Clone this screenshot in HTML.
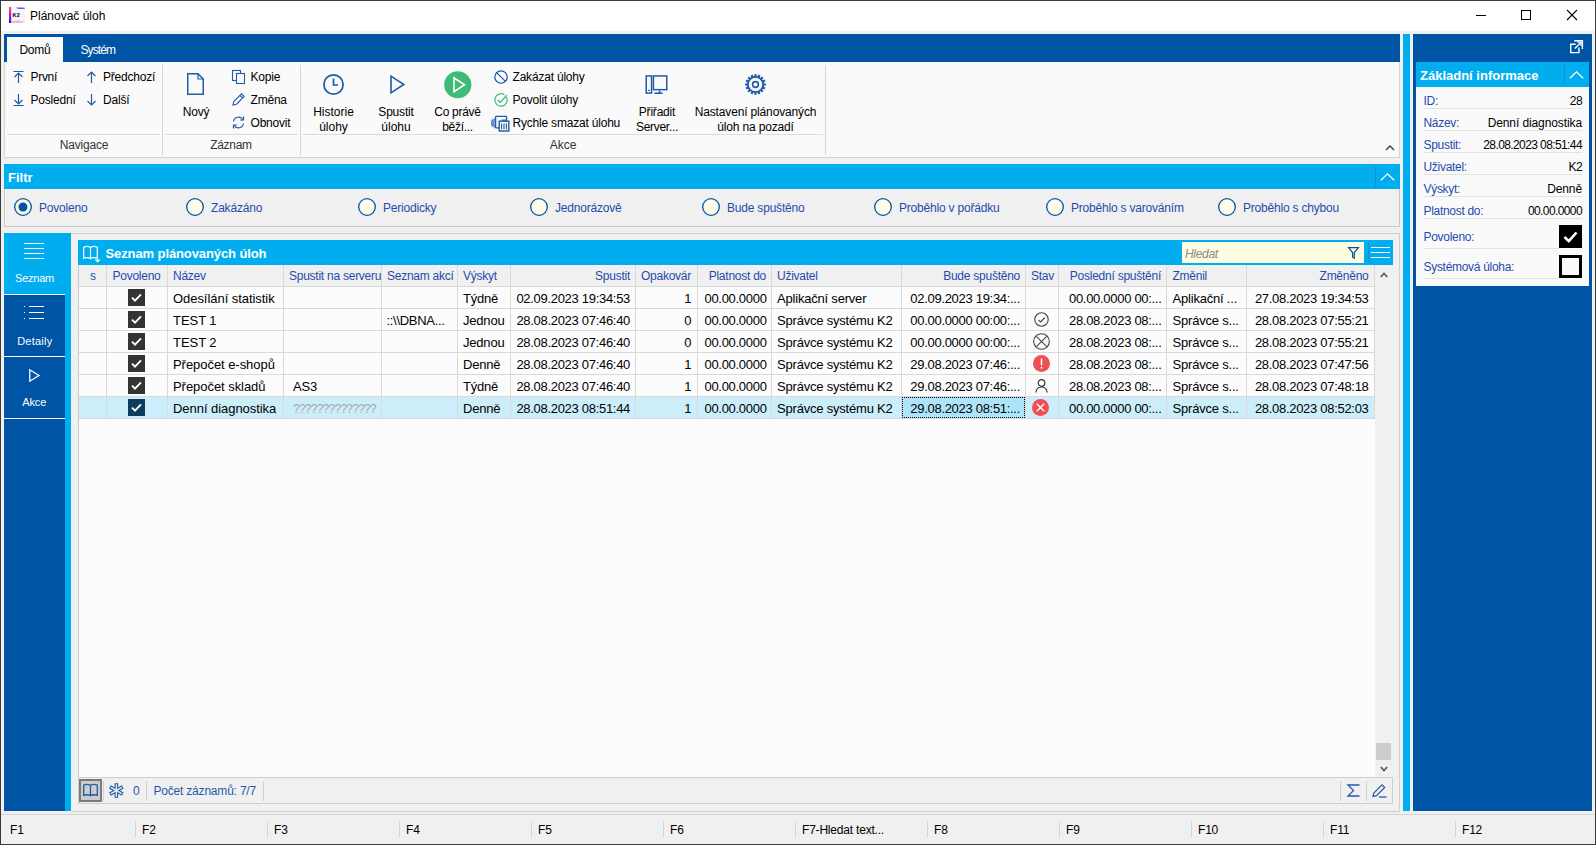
<!DOCTYPE html><html><head><meta charset="utf-8"><style>
html,body{margin:0;padding:0;}
body{width:1596px;height:845px;overflow:hidden;position:relative;background:#f0f0f0;font-family:"Liberation Sans",sans-serif;}
.a{position:absolute;}
.t{position:absolute;white-space:nowrap;line-height:16px;}
svg{overflow:visible}
</style></head><body>
<div class="a" style="left:0px;top:0px;width:1596px;height:845px;background:#f0f0f0;"></div>
<div class="a" style="left:0px;top:0px;width:1596px;height:31px;background:#ffffff;"></div>
<div class="a" style="left:0px;top:0px;width:1596px;height:1px;background:#3a3a3a;"></div>
<div class="a" style="left:0px;top:0px;width:1px;height:845px;background:#3a3a3a;"></div>
<div class="a" style="left:1595px;top:0px;width:1px;height:845px;background:#3a3a3a;"></div>
<div class="a" style="left:0px;top:844px;width:1596px;height:1px;background:#3a3a3a;"></div>
<svg class="a" style="left:9px;top:7px;" width="16" height="16" viewBox="0 0 16 16"><defs><linearGradient id="k2g" x1="0" y1="0" x2="0" y2="1"><stop offset="0" stop-color="#ff5060"/><stop offset="0.5" stop-color="#d010d8"/><stop offset="1" stop-color="#2a10f0"/></linearGradient><linearGradient id="k2b" x1="0" y1="0" x2="1" y2="0"><stop offset="0" stop-color="#ff9060"/><stop offset="0.5" stop-color="#f070a0"/><stop offset="1" stop-color="#d090f0" stop-opacity="0.5"/></linearGradient></defs><rect x="0" y="0" width="16" height="16" fill="#f7f6fb"/><rect x="0" y="0" width="2.2" height="16" fill="url(#k2g)"/><path d="M7.5 0.6C10 0.3 13 0.5 15.8 0.8V1.8C13 2.3 10 2.2 7.5 1.2Z" fill="#7050f0"/><text x="3.6" y="10" font-size="5.6" font-weight="bold" font-family="Liberation Sans" fill="#000">K2</text><path d="M2.2 16V14.3C6 13.5 10 12.7 15.8 14.5V16Z" fill="url(#k2b)" opacity="0.55"/></svg>
<div class="t" style="top:8px;font-size:12px;color:#000;left:30px;">Plánovač úloh</div>
<div class="a" style="left:1476px;top:15px;width:10px;height:1px;background:#000;"></div>
<div class="a" style="left:1521px;top:10px;width:8px;height:8px;border:1px solid #000"></div>
<svg class="a" style="left:1567px;top:10px;" width="10" height="10" viewBox="0 0 10 10"><path d="M0 0L10 10M10 0L0 10" stroke="#000" stroke-width="1.1"/></svg>
<div class="a" style="left:4px;top:34px;width:1396px;height:28px;background:#0054a6;"></div>
<div class="a" style="left:7px;top:37px;width:56px;height:25px;background:#fafafa;"></div>
<div class="t" style="top:42px;font-size:12px;color:#000;left:19.5px;letter-spacing:-0.3px">Domů</div>
<div class="t" style="top:42px;font-size:12px;color:#fff;left:80.5px;letter-spacing:-0.9px">Systém</div>
<div class="a" style="left:4px;top:62px;width:1394px;height:95px;background:#fafafa;border:1px solid #d5d5d5;border-top:none"></div>
<div class="a" style="left:162px;top:65px;width:1px;height:90px;background:#d5d5d5;"></div>
<div class="a" style="left:300px;top:65px;width:1px;height:90px;background:#d5d5d5;"></div>
<div class="a" style="left:825px;top:65px;width:1px;height:90px;background:#d5d5d5;"></div>
<div class="a" style="left:7px;top:134px;width:153px;height:1px;background:#dcdcdc;"></div>
<div class="a" style="left:165px;top:134px;width:133px;height:1px;background:#dcdcdc;"></div>
<div class="a" style="left:303px;top:134px;width:520px;height:1px;background:#dcdcdc;"></div>
<div class="t" style="top:137px;font-size:12px;color:#333;left:-116px;width:400px;text-align:center;letter-spacing:-0.2px">Navigace</div>
<div class="t" style="top:137px;font-size:12px;color:#333;left:31px;width:400px;text-align:center;letter-spacing:-0.3px">Záznam</div>
<div class="t" style="top:137px;font-size:12px;color:#333;left:363px;width:400px;text-align:center;">Akce</div>
<svg class="a" style="left:1385px;top:145px;" width="10" height="6" viewBox="0 0 10 6"><path d="M1 5L5 1L9 5" stroke="#444" stroke-width="1.5" fill="none"/></svg>
<svg class="a" style="left:13px;top:70.5px;" width="11" height="12" viewBox="0 0 11 12"><path d="M0.5 0.5H10.5M5.5 2V12M1.5 6L5.5 2L9.5 6" stroke="#1f5ba6" stroke-width="1.2" fill="none"/></svg>
<div class="t" style="top:69px;font-size:12px;color:#000;left:30.5px;letter-spacing:-0.3px">První</div>
<svg class="a" style="left:13px;top:93.5px;" width="11" height="12" viewBox="0 0 11 12"><path d="M0.5 11.5H10.5M5.5 0V10M1.5 6L5.5 10L9.5 6" stroke="#1f5ba6" stroke-width="1.2" fill="none"/></svg>
<div class="t" style="top:92px;font-size:12px;color:#000;left:30.5px;letter-spacing:-0.2px">Poslední</div>
<svg class="a" style="left:86px;top:70.5px;" width="11" height="12" viewBox="0 0 11 12"><path d="M5.5 1V12M1.5 5L5.5 1L9.5 5" stroke="#1f5ba6" stroke-width="1.2" fill="none"/></svg>
<div class="t" style="top:69px;font-size:12px;color:#000;left:103px;letter-spacing:-0.2px">Předchozí</div>
<svg class="a" style="left:86px;top:93.5px;" width="11" height="12" viewBox="0 0 11 12"><path d="M5.5 0V11M1.5 7L5.5 11L9.5 7" stroke="#1f5ba6" stroke-width="1.2" fill="none"/></svg>
<div class="t" style="top:92px;font-size:12px;color:#000;left:103px;letter-spacing:-0.2px">Další</div>
<svg class="a" style="left:187px;top:73px;" width="17" height="22" viewBox="0 0 17 22"><path d="M0.75 0.75H11L16.25 6V21.25H0.75Z" stroke="#1f5ba6" stroke-width="1.5" fill="none"/><path d="M11 0.75V6H16.25" stroke="#1f5ba6" stroke-width="1.2" fill="none"/></svg>
<div class="t" style="top:104px;font-size:12px;color:#000;left:-4px;width:400px;text-align:center;letter-spacing:-0.2px">Nový</div>
<svg class="a" style="left:232px;top:70px;" width="13" height="14" viewBox="0 0 13 14"><rect x="0.5" y="0.5" width="8" height="10" stroke="#1f5ba6" stroke-width="1.1" fill="#fafafa"/><rect x="4.5" y="3.5" width="8" height="10" stroke="#1f5ba6" stroke-width="1.1" fill="#fafafa"/></svg>
<div class="t" style="top:69px;font-size:12px;color:#000;left:250.5px;letter-spacing:-0.2px">Kopie</div>
<svg class="a" style="left:232px;top:93px;" width="13" height="13" viewBox="0 0 13 13"><path d="M1 12L1.8 8.5L9.5 0.8L12.2 3.5L4.5 11.2Z M8 2.3L10.7 5" stroke="#1f5ba6" stroke-width="1.1" fill="none"/></svg>
<div class="t" style="top:92px;font-size:12px;color:#000;left:250.5px;letter-spacing:-0.2px">Změna</div>
<svg class="a" style="left:232px;top:116px;" width="13" height="13" viewBox="0 0 13 13"><path d="M1.5 5.5A5.2 5.2 0 0 1 11 3.5M11.5 7.5A5.2 5.2 0 0 1 2 9.5" stroke="#1f5ba6" stroke-width="1.2" fill="none"/><path d="M11.5 0.5V4H8M1.5 12.5V9H5" stroke="#1f5ba6" stroke-width="1.2" fill="none"/></svg>
<div class="t" style="top:115px;font-size:12px;color:#000;left:250.5px;letter-spacing:-0.2px">Obnovit</div>
<svg class="a" style="left:323px;top:74px;" width="21" height="21" viewBox="0 0 21 21"><circle cx="10.5" cy="10.5" r="9.6" stroke="#1f5ba6" stroke-width="1.7" fill="none"/><path d="M10.5 4.5V11H15" stroke="#1f5ba6" stroke-width="1.7" fill="none"/></svg>
<div class="t" style="top:104px;font-size:12px;color:#000;left:133.5px;width:400px;text-align:center;">Historie</div>
<div class="t" style="top:119px;font-size:12px;color:#000;left:133.5px;width:400px;text-align:center;">úlohy</div>
<svg class="a" style="left:390px;top:75px;" width="15" height="19" viewBox="0 0 15 19"><path d="M1 1.2V17.8L13.8 9.5Z" stroke="#1f5ba6" stroke-width="1.6" fill="none" stroke-linejoin="miter"/></svg>
<div class="t" style="top:104px;font-size:12px;color:#000;left:196px;width:400px;text-align:center;letter-spacing:-0.2px">Spustit</div>
<div class="t" style="top:119px;font-size:12px;color:#000;left:196px;width:400px;text-align:center;">úlohu</div>
<svg class="a" style="left:444px;top:71px;" width="28" height="28" viewBox="0 0 28 28"><circle cx="13.75" cy="13.75" r="13.6" fill="#3dbd74"/><path d="M10 6.8V20.7L20.5 13.75Z" stroke="#fff" stroke-width="1.6" fill="none"/></svg>
<div class="t" style="top:104px;font-size:12px;color:#000;left:257.5px;width:400px;text-align:center;letter-spacing:-0.3px">Co právě</div>
<div class="t" style="top:119px;font-size:12px;color:#000;left:257.5px;width:400px;text-align:center;letter-spacing:-0.3px">běží...</div>
<svg class="a" style="left:494px;top:70px;" width="14" height="14" viewBox="0 0 14 14"><circle cx="7" cy="7" r="6.2" stroke="#1f5ba6" stroke-width="1.3" fill="none"/><path d="M2.6 2.6L11.4 11.4" stroke="#1f5ba6" stroke-width="1.3"/></svg>
<div class="t" style="top:69px;font-size:12px;color:#000;left:512.5px;letter-spacing:-0.2px">Zakázat úlohy</div>
<svg class="a" style="left:494px;top:93px;" width="14" height="14" viewBox="0 0 14 14"><path d="M12.6 4.2A6.2 6.2 0 1 1 10.5 1.8" stroke="#3dbd74" stroke-width="1.2" fill="none"/><path d="M3.8 7L6.2 9.4L12.8 2.2" stroke="#3dbd74" stroke-width="1.3" fill="none"/></svg>
<div class="t" style="top:92px;font-size:12px;color:#000;left:512.5px;letter-spacing:-0.2px">Povolit úlohy</div>
<svg class="a" style="left:491px;top:115px;" width="19" height="17" viewBox="0 0 19 17"><path d="M1.3 4.5C0.8 6.5 0.8 9.5 1.3 11.5M3.2 3.5C2.7 6 2.7 10 3.2 12.5" stroke="#1f5ba6" stroke-width="1.2" fill="none"/><rect x="4.6" y="1.4" width="11" height="11.5" rx="0.5" stroke="#1f5ba6" stroke-width="1.3" fill="#fafafa"/><rect x="8.2" y="6.2" width="9.6" height="9.8" stroke="#1f5ba6" stroke-width="1.4" fill="#fafafa"/><path d="M10.6 8.5V14.2M13 8.5V14.2M15.4 8.5V14.2" stroke="#1f5ba6" stroke-width="1.1"/><path d="M10.5 5.2H15.5" stroke="#1f5ba6" stroke-width="1.2"/></svg>
<div class="t" style="top:115px;font-size:12px;color:#000;left:512.5px;letter-spacing:-0.2px">Rychle smazat úlohu</div>
<svg class="a" style="left:645px;top:74px;" width="23" height="21" viewBox="0 0 23 21"><rect x="1.25" y="1.95" width="5.3" height="17.1" stroke="#1f5ba6" stroke-width="1.5" fill="none"/><rect x="8.45" y="1.95" width="13.3" height="13.7" stroke="#1f5ba6" stroke-width="1.5" fill="none"/><path d="M14.6 16.4V19M9.5 19.2H17.6" stroke="#1f5ba6" stroke-width="1.6"/><path d="M3 16.3H5" stroke="#1f5ba6" stroke-width="1"/></svg>
<div class="t" style="top:104px;font-size:12px;color:#000;left:457px;width:400px;text-align:center;letter-spacing:-0.2px">Přiřadit</div>
<div class="t" style="top:119px;font-size:12px;color:#000;left:457px;width:400px;text-align:center;letter-spacing:-0.3px">Server...</div>
<svg class="a" style="left:745px;top:74px;" width="21" height="21" viewBox="0 0 21 21"><g transform="translate(10.5 10.5)"><rect x="-1.1" y="-10.3" width="2.2" height="3" fill="#1f5ba6" transform="rotate(0.0)"/><rect x="-1.1" y="-10.3" width="2.2" height="3" fill="#1f5ba6" transform="rotate(22.5)"/><rect x="-1.1" y="-10.3" width="2.2" height="3" fill="#1f5ba6" transform="rotate(45.0)"/><rect x="-1.1" y="-10.3" width="2.2" height="3" fill="#1f5ba6" transform="rotate(67.5)"/><rect x="-1.1" y="-10.3" width="2.2" height="3" fill="#1f5ba6" transform="rotate(90.0)"/><rect x="-1.1" y="-10.3" width="2.2" height="3" fill="#1f5ba6" transform="rotate(112.5)"/><rect x="-1.1" y="-10.3" width="2.2" height="3" fill="#1f5ba6" transform="rotate(135.0)"/><rect x="-1.1" y="-10.3" width="2.2" height="3" fill="#1f5ba6" transform="rotate(157.5)"/><rect x="-1.1" y="-10.3" width="2.2" height="3" fill="#1f5ba6" transform="rotate(180.0)"/><rect x="-1.1" y="-10.3" width="2.2" height="3" fill="#1f5ba6" transform="rotate(202.5)"/><rect x="-1.1" y="-10.3" width="2.2" height="3" fill="#1f5ba6" transform="rotate(225.0)"/><rect x="-1.1" y="-10.3" width="2.2" height="3" fill="#1f5ba6" transform="rotate(247.5)"/><rect x="-1.1" y="-10.3" width="2.2" height="3" fill="#1f5ba6" transform="rotate(270.0)"/><rect x="-1.1" y="-10.3" width="2.2" height="3" fill="#1f5ba6" transform="rotate(292.5)"/><rect x="-1.1" y="-10.3" width="2.2" height="3" fill="#1f5ba6" transform="rotate(315.0)"/><rect x="-1.1" y="-10.3" width="2.2" height="3" fill="#1f5ba6" transform="rotate(337.5)"/><circle r="7.6" stroke="#1f5ba6" stroke-width="1.8" fill="none"/><circle r="2.9" stroke="#1f5ba6" stroke-width="1.6" fill="none"/></g></svg>
<div class="t" style="top:104px;font-size:12px;color:#000;left:555.5px;width:400px;text-align:center;letter-spacing:-0.15px">Nastavení plánovaných</div>
<div class="t" style="top:119px;font-size:12px;color:#000;left:555.5px;width:400px;text-align:center;letter-spacing:-0.15px">úloh na pozadí</div>
<div class="a" style="left:4px;top:164px;width:1396px;height:25px;background:#00aeef;"></div>
<div class="t" style="top:169.5px;font-size:13px;color:#fff;font-weight:bold;left:8px;">Filtr</div>
<div class="a" style="left:1375px;top:166px;width:1px;height:21px;background:#1591c9;"></div>
<svg class="a" style="left:1380px;top:173px;" width="15" height="8" viewBox="0 0 15 8"><path d="M0.8 7.2L7.5 0.8L14.2 7.2" stroke="#fff" stroke-width="1.3" fill="none"/></svg>
<div class="a" style="left:4px;top:189px;width:1394px;height:37px;background:#f0f0f0;border:1px solid #c9c9c9;border-top:none"></div>
<svg class="a" style="left:14px;top:198px;" width="18" height="18" viewBox="0 0 18 18"><circle cx="9" cy="9" r="8.3" fill="#fffde8" stroke="#0054a6" stroke-width="1.3"/><circle cx="9" cy="9" r="4.5" fill="#0054a6"/></svg>
<div class="t" style="top:200px;font-size:12px;color:#1f4cac;left:39px;letter-spacing:-0.2px">Povoleno</div>
<svg class="a" style="left:186px;top:198px;" width="18" height="18" viewBox="0 0 18 18"><circle cx="9" cy="9" r="8.3" fill="#fffde8" stroke="#0054a6" stroke-width="1.3"/></svg>
<div class="t" style="top:200px;font-size:12px;color:#1f4cac;left:211px;letter-spacing:-0.2px">Zakázáno</div>
<svg class="a" style="left:358px;top:198px;" width="18" height="18" viewBox="0 0 18 18"><circle cx="9" cy="9" r="8.3" fill="#fffde8" stroke="#0054a6" stroke-width="1.3"/></svg>
<div class="t" style="top:200px;font-size:12px;color:#1f4cac;left:383px;letter-spacing:-0.2px">Periodicky</div>
<svg class="a" style="left:530px;top:198px;" width="18" height="18" viewBox="0 0 18 18"><circle cx="9" cy="9" r="8.3" fill="#fffde8" stroke="#0054a6" stroke-width="1.3"/></svg>
<div class="t" style="top:200px;font-size:12px;color:#1f4cac;left:555px;letter-spacing:-0.2px">Jednorázově</div>
<svg class="a" style="left:702px;top:198px;" width="18" height="18" viewBox="0 0 18 18"><circle cx="9" cy="9" r="8.3" fill="#fffde8" stroke="#0054a6" stroke-width="1.3"/></svg>
<div class="t" style="top:200px;font-size:12px;color:#1f4cac;left:727px;letter-spacing:-0.2px">Bude spuštěno</div>
<svg class="a" style="left:874px;top:198px;" width="18" height="18" viewBox="0 0 18 18"><circle cx="9" cy="9" r="8.3" fill="#fffde8" stroke="#0054a6" stroke-width="1.3"/></svg>
<div class="t" style="top:200px;font-size:12px;color:#1f4cac;left:899px;letter-spacing:-0.2px">Proběhlo v pořádku</div>
<svg class="a" style="left:1046px;top:198px;" width="18" height="18" viewBox="0 0 18 18"><circle cx="9" cy="9" r="8.3" fill="#fffde8" stroke="#0054a6" stroke-width="1.3"/></svg>
<div class="t" style="top:200px;font-size:12px;color:#1f4cac;left:1071px;letter-spacing:-0.2px">Proběhlo s varováním</div>
<svg class="a" style="left:1218px;top:198px;" width="18" height="18" viewBox="0 0 18 18"><circle cx="9" cy="9" r="8.3" fill="#fffde8" stroke="#0054a6" stroke-width="1.3"/></svg>
<div class="t" style="top:200px;font-size:12px;color:#1f4cac;left:1243px;letter-spacing:-0.2px">Proběhlo s chybou</div>
<div class="a" style="left:4px;top:233px;width:67px;height:578px;background:#00aeef;"></div>
<div class="a" style="left:4px;top:295px;width:61px;height:516px;background:#0054a6;"></div>
<div class="a" style="left:4px;top:294px;width:61px;height:1px;background:#ffffff;"></div>
<div class="a" style="left:4px;top:356px;width:61px;height:1px;background:#ffffff;"></div>
<div class="a" style="left:4px;top:418px;width:61px;height:1px;background:#ffffff;"></div>
<div class="a" style="left:24px;top:243px;width:20px;height:1px;background:#ffffff;"></div>
<div class="a" style="left:24px;top:248px;width:20px;height:1px;background:#ffffff;"></div>
<div class="a" style="left:24px;top:253px;width:20px;height:1px;background:#ffffff;"></div>
<div class="a" style="left:24px;top:258px;width:20px;height:1px;background:#ffffff;"></div>
<div class="t" style="top:269.5px;font-size:11px;color:#fff;left:-165.5px;width:400px;text-align:center;letter-spacing:-0.25px">Seznam</div>
<div class="a" style="left:24px;top:306px;width:1px;height:1px;background:#ffffff;"></div>
<div class="a" style="left:29px;top:306px;width:15px;height:1px;background:#ffffff;"></div>
<div class="a" style="left:24px;top:312px;width:1px;height:1px;background:#ffffff;"></div>
<div class="a" style="left:29px;top:312px;width:15px;height:1px;background:#ffffff;"></div>
<div class="a" style="left:24px;top:318px;width:1px;height:1px;background:#ffffff;"></div>
<div class="a" style="left:29px;top:318px;width:15px;height:1px;background:#ffffff;"></div>
<div class="t" style="top:332.5px;font-size:11px;color:#fff;left:-165.2px;width:400px;text-align:center;letter-spacing:0.25px">Detaily</div>
<svg class="a" style="left:29px;top:369px;" width="11" height="13" viewBox="0 0 11 13"><path d="M0.8 0.8V12.2L10 6.5Z" stroke="#fff" stroke-width="1.3" fill="none"/></svg>
<div class="t" style="top:393.5px;font-size:11px;color:#fff;left:-165.8px;width:400px;text-align:center;letter-spacing:-0.1px">Akce</div>
<div class="a" style="left:71px;top:233px;width:1328px;height:577px;background:#f0f0f0;border:1px solid #cfcfcf;border-left:none"></div>
<div class="a" style="left:78px;top:240px;width:1315px;height:25px;background:#00aeef;"></div>
<svg class="a" style="left:83px;top:246px;" width="16" height="15" viewBox="0 0 16 15"><path d="M0.7 1.2C3 0.2 5.5 0.2 7.5 1.5C9.5 0.2 12 0.2 14.3 1.2V12.3C12 11.4 9.5 11.4 7.5 12.8C5.5 11.4 3 11.4 0.7 12.3Z M7.5 1.5V12.8" stroke="#fff" stroke-width="1.2" fill="none"/><path d="M11.6 13.6H17.6L14.6 16.6Z" fill="#fff"/></svg>
<div class="t" style="top:246.0px;font-size:13px;color:#fff;font-weight:bold;left:105.5px;letter-spacing:-0.1px">Seznam plánovaných úloh</div>
<div class="a" style="left:1182px;top:242px;width:182px;height:21px;background:#fefde2;"></div>
<div class="t" style="top:246px;font-size:12px;color:#8a8a8a;font-style:italic;left:1185px;letter-spacing:-0.3px">Hledat</div>
<svg class="a" style="left:1348px;top:247px;" width="11" height="12" viewBox="0 0 11 12"><path d="M0.6 0.6H10.4L6.3 5.5V11.2L4.6 10.2V5.5Z" stroke="#0054a6" stroke-width="1.2" fill="none"/></svg>
<div class="a" style="left:1368px;top:243px;width:1px;height:19px;background:#1591c9;"></div>
<div class="a" style="left:1371px;top:247px;width:19px;height:1px;background:#ffffff;"></div>
<div class="a" style="left:1371px;top:252px;width:19px;height:1px;background:#ffffff;"></div>
<div class="a" style="left:1371px;top:257px;width:19px;height:1px;background:#ffffff;"></div>
<div class="a" style="left:78px;top:265px;width:1297px;height:21px;background:#f0f0f0;"></div>
<div class="a" style="left:78px;top:286px;width:1297px;height:491px;background:#fcfcfc;"></div>
<div class="a" style="left:1375px;top:265px;width:17px;height:512px;background:#f0f0f0;"></div>
<svg class="a" style="left:1380px;top:272px;" width="8" height="6" viewBox="0 0 8 6"><path d="M0.8 5L4 1.5L7.2 5" stroke="#555" stroke-width="1.6" fill="none"/></svg>
<div class="a" style="left:1376px;top:743px;width:15px;height:17px;background:#cdcdcd;"></div>
<svg class="a" style="left:1380px;top:766px;" width="8" height="6" viewBox="0 0 8 6"><path d="M0.8 1L4 4.5L7.2 1" stroke="#555" stroke-width="1.6" fill="none"/></svg>
<div class="a" style="left:78px;top:265px;width:1px;height:512px;background:#c9c9c9;"></div>
<div class="a" style="left:79px;top:286px;width:1296px;height:1px;background:#d9d9d9;"></div>
<div class="a" style="left:106px;top:265px;width:1px;height:153px;background:#d9d9d9;"></div>
<div class="a" style="left:167px;top:265px;width:1px;height:153px;background:#d9d9d9;"></div>
<div class="a" style="left:283px;top:265px;width:1px;height:153px;background:#d9d9d9;"></div>
<div class="a" style="left:381px;top:265px;width:1px;height:153px;background:#d9d9d9;"></div>
<div class="a" style="left:457px;top:265px;width:1px;height:153px;background:#d9d9d9;"></div>
<div class="a" style="left:510px;top:265px;width:1px;height:153px;background:#d9d9d9;"></div>
<div class="a" style="left:635px;top:265px;width:1px;height:153px;background:#d9d9d9;"></div>
<div class="a" style="left:697px;top:265px;width:1px;height:153px;background:#d9d9d9;"></div>
<div class="a" style="left:771px;top:265px;width:1px;height:153px;background:#d9d9d9;"></div>
<div class="a" style="left:901px;top:265px;width:1px;height:153px;background:#d9d9d9;"></div>
<div class="a" style="left:1025px;top:265px;width:1px;height:153px;background:#d9d9d9;"></div>
<div class="a" style="left:1058px;top:265px;width:1px;height:153px;background:#d9d9d9;"></div>
<div class="a" style="left:1166px;top:265px;width:1px;height:153px;background:#d9d9d9;"></div>
<div class="a" style="left:1246px;top:265px;width:1px;height:153px;background:#d9d9d9;"></div>
<div class="a" style="left:1374px;top:265px;width:1px;height:153px;background:#d9d9d9;"></div>
<div class="t" style="top:267.5px;font-size:12px;color:#1f4cac;left:90px;letter-spacing:-0.25px">s</div>
<div class="t" style="top:267.5px;font-size:12px;color:#1f4cac;left:112.5px;letter-spacing:-0.25px">Povoleno</div>
<div class="t" style="top:267.5px;font-size:12px;color:#1f4cac;left:173px;letter-spacing:-0.25px">Název</div>
<div class="t" style="top:267.5px;font-size:12px;color:#1f4cac;left:289px;letter-spacing:-0.25px">Spustit na serveru</div>
<div class="t" style="top:267.5px;font-size:12px;color:#1f4cac;left:387px;letter-spacing:-0.25px">Seznam akcí</div>
<div class="t" style="top:267.5px;font-size:12px;color:#1f4cac;left:463px;letter-spacing:-0.25px">Výskyt</div>
<div class="t" style="top:267.5px;font-size:12px;color:#1f4cac;right:966px;letter-spacing:-0.25px">Spustit</div>
<div class="t" style="top:267.5px;font-size:12px;color:#1f4cac;left:641px;letter-spacing:-0.25px">Opakovár</div>
<div class="t" style="top:267.5px;font-size:12px;color:#1f4cac;right:830px;letter-spacing:-0.25px">Platnost do</div>
<div class="t" style="top:267.5px;font-size:12px;color:#1f4cac;left:777px;letter-spacing:-0.25px">Uživatel</div>
<div class="t" style="top:267.5px;font-size:12px;color:#1f4cac;right:576px;letter-spacing:-0.25px">Bude spuštěno</div>
<div class="t" style="top:267.5px;font-size:12px;color:#1f4cac;left:1031px;letter-spacing:-0.25px">Stav</div>
<div class="t" style="top:267.5px;font-size:12px;color:#1f4cac;right:435px;letter-spacing:-0.25px">Poslední spuštění</div>
<div class="t" style="top:267.5px;font-size:12px;color:#1f4cac;left:1172.5px;letter-spacing:-0.25px">Změnil</div>
<div class="t" style="top:267.5px;font-size:12px;color:#1f4cac;right:227.5px;letter-spacing:-0.25px">Změněno</div>
<div class="a" style="left:79px;top:308px;width:1296px;height:1px;background:#d9d9d9;"></div>
<svg class="a" style="left:128px;top:289px;" width="17" height="17" viewBox="0 0 17 17"><rect width="17" height="17" fill="#333333"/><path d="M4 8.6L7 11.6L13 5.4" stroke="#fff" stroke-width="1.9" fill="none"/></svg>
<div class="t" style="top:290.5px;font-size:13px;color:#000;left:173px;letter-spacing:-0.05px">Odesílání statistik</div>
<div class="t" style="top:290.5px;font-size:13px;color:#000;left:463px;letter-spacing:-0.2px">Týdně</div>
<div class="t" style="top:290.5px;font-size:13px;color:#000;right:966px;letter-spacing:-0.3px">02.09.2023 19:34:53</div>
<div class="t" style="top:290.5px;font-size:13px;color:#000;right:904.5px;">1</div>
<div class="t" style="top:290.5px;font-size:13px;color:#000;left:704.5px;letter-spacing:-0.3px">00.00.0000</div>
<div class="t" style="top:290.5px;font-size:13px;color:#000;left:777px;letter-spacing:-0.2px">Aplikační server</div>
<div class="t" style="top:290.5px;font-size:13px;color:#000;right:576px;letter-spacing:-0.3px">02.09.2023 19:34:...</div>
<div class="t" style="top:290.5px;font-size:13px;color:#000;left:1069px;letter-spacing:-0.3px">00.00.0000 00:...</div>
<div class="t" style="top:290.5px;font-size:13px;color:#000;left:1172.5px;letter-spacing:-0.2px">Aplikační ...</div>
<div class="t" style="top:290.5px;font-size:13px;color:#000;right:227.5px;letter-spacing:-0.3px">27.08.2023 19:34:53</div>
<div class="a" style="left:79px;top:330px;width:1296px;height:1px;background:#d9d9d9;"></div>
<svg class="a" style="left:128px;top:311px;" width="17" height="17" viewBox="0 0 17 17"><rect width="17" height="17" fill="#333333"/><path d="M4 8.6L7 11.6L13 5.4" stroke="#fff" stroke-width="1.9" fill="none"/></svg>
<div class="t" style="top:312.5px;font-size:13px;color:#000;left:173px;letter-spacing:-0.05px">TEST 1</div>
<div class="t" style="top:312.5px;font-size:13px;color:#000;left:386.5px;letter-spacing:-0.3px">::\\DBNA...</div>
<div class="t" style="top:312.5px;font-size:13px;color:#000;left:463px;letter-spacing:-0.2px">Jednou</div>
<div class="t" style="top:312.5px;font-size:13px;color:#000;right:966px;letter-spacing:-0.3px">28.08.2023 07:46:40</div>
<div class="t" style="top:312.5px;font-size:13px;color:#000;right:904.5px;">0</div>
<div class="t" style="top:312.5px;font-size:13px;color:#000;left:704.5px;letter-spacing:-0.3px">00.00.0000</div>
<div class="t" style="top:312.5px;font-size:13px;color:#000;left:777px;letter-spacing:-0.2px">Správce systému K2</div>
<div class="t" style="top:312.5px;font-size:13px;color:#000;right:576px;letter-spacing:-0.3px">00.00.0000 00:00:...</div>
<div class="t" style="top:312.5px;font-size:13px;color:#000;left:1069px;letter-spacing:-0.3px">28.08.2023 08:...</div>
<div class="t" style="top:312.5px;font-size:13px;color:#000;left:1172.5px;letter-spacing:-0.2px">Správce s...</div>
<div class="t" style="top:312.5px;font-size:13px;color:#000;right:227.5px;letter-spacing:-0.3px">28.08.2023 07:55:21</div>
<svg class="a" style="left:1034px;top:312px;" width="15" height="15" viewBox="0 0 15 15"><circle cx="7.5" cy="7.5" r="6.7" stroke="#444" stroke-width="1.1" fill="none"/><path d="M4.5 7.8L6.6 9.9L10.8 5.5" stroke="#444" stroke-width="1.1" fill="none"/></svg>
<div class="a" style="left:79px;top:352px;width:1296px;height:1px;background:#d9d9d9;"></div>
<svg class="a" style="left:128px;top:333px;" width="17" height="17" viewBox="0 0 17 17"><rect width="17" height="17" fill="#333333"/><path d="M4 8.6L7 11.6L13 5.4" stroke="#fff" stroke-width="1.9" fill="none"/></svg>
<div class="t" style="top:334.5px;font-size:13px;color:#000;left:173px;letter-spacing:-0.05px">TEST 2</div>
<div class="t" style="top:334.5px;font-size:13px;color:#000;left:463px;letter-spacing:-0.2px">Jednou</div>
<div class="t" style="top:334.5px;font-size:13px;color:#000;right:966px;letter-spacing:-0.3px">28.08.2023 07:46:40</div>
<div class="t" style="top:334.5px;font-size:13px;color:#000;right:904.5px;">0</div>
<div class="t" style="top:334.5px;font-size:13px;color:#000;left:704.5px;letter-spacing:-0.3px">00.00.0000</div>
<div class="t" style="top:334.5px;font-size:13px;color:#000;left:777px;letter-spacing:-0.2px">Správce systému K2</div>
<div class="t" style="top:334.5px;font-size:13px;color:#000;right:576px;letter-spacing:-0.3px">00.00.0000 00:00:...</div>
<div class="t" style="top:334.5px;font-size:13px;color:#000;left:1069px;letter-spacing:-0.3px">28.08.2023 08:...</div>
<div class="t" style="top:334.5px;font-size:13px;color:#000;left:1172.5px;letter-spacing:-0.2px">Správce s...</div>
<div class="t" style="top:334.5px;font-size:13px;color:#000;right:227.5px;letter-spacing:-0.3px">28.08.2023 07:55:21</div>
<svg class="a" style="left:1033px;top:333px;" width="17" height="17" viewBox="0 0 17 17"><circle cx="8.5" cy="8.5" r="7.8" stroke="#444" stroke-width="1.1" fill="none"/><path d="M3.3 3.3L13.7 13.7M13.7 3.3L3.3 13.7" stroke="#444" stroke-width="1.1"/></svg>
<div class="a" style="left:79px;top:374px;width:1296px;height:1px;background:#d9d9d9;"></div>
<svg class="a" style="left:128px;top:355px;" width="17" height="17" viewBox="0 0 17 17"><rect width="17" height="17" fill="#333333"/><path d="M4 8.6L7 11.6L13 5.4" stroke="#fff" stroke-width="1.9" fill="none"/></svg>
<div class="t" style="top:356.5px;font-size:13px;color:#000;left:173px;letter-spacing:-0.05px">Přepočet e-shopů</div>
<div class="t" style="top:356.5px;font-size:13px;color:#000;left:463px;letter-spacing:-0.2px">Denně</div>
<div class="t" style="top:356.5px;font-size:13px;color:#000;right:966px;letter-spacing:-0.3px">28.08.2023 07:46:40</div>
<div class="t" style="top:356.5px;font-size:13px;color:#000;right:904.5px;">1</div>
<div class="t" style="top:356.5px;font-size:13px;color:#000;left:704.5px;letter-spacing:-0.3px">00.00.0000</div>
<div class="t" style="top:356.5px;font-size:13px;color:#000;left:777px;letter-spacing:-0.2px">Správce systému K2</div>
<div class="t" style="top:356.5px;font-size:13px;color:#000;right:576px;letter-spacing:-0.3px">29.08.2023 07:46:...</div>
<div class="t" style="top:356.5px;font-size:13px;color:#000;left:1069px;letter-spacing:-0.3px">28.08.2023 08:...</div>
<div class="t" style="top:356.5px;font-size:13px;color:#000;left:1172.5px;letter-spacing:-0.2px">Správce s...</div>
<div class="t" style="top:356.5px;font-size:13px;color:#000;right:227.5px;letter-spacing:-0.3px">28.08.2023 07:47:56</div>
<svg class="a" style="left:1033px;top:355px;" width="17" height="17" viewBox="0 0 17 17"><circle cx="8.5" cy="8.5" r="8.5" fill="#ee4f55"/><path d="M8.5 3.5V10.5" stroke="#fff" stroke-width="1.5"/><rect x="7.7" y="12" width="1.6" height="1.6" fill="#fff"/></svg>
<div class="a" style="left:79px;top:396px;width:1296px;height:1px;background:#d9d9d9;"></div>
<svg class="a" style="left:128px;top:377px;" width="17" height="17" viewBox="0 0 17 17"><rect width="17" height="17" fill="#333333"/><path d="M4 8.6L7 11.6L13 5.4" stroke="#fff" stroke-width="1.9" fill="none"/></svg>
<div class="t" style="top:378.5px;font-size:13px;color:#000;left:173px;letter-spacing:-0.05px">Přepočet skladů</div>
<div class="t" style="top:378.5px;font-size:13px;color:#000;left:293px;letter-spacing:-0.2px">AS3</div>
<div class="t" style="top:378.5px;font-size:13px;color:#000;left:463px;letter-spacing:-0.2px">Týdně</div>
<div class="t" style="top:378.5px;font-size:13px;color:#000;right:966px;letter-spacing:-0.3px">28.08.2023 07:46:40</div>
<div class="t" style="top:378.5px;font-size:13px;color:#000;right:904.5px;">1</div>
<div class="t" style="top:378.5px;font-size:13px;color:#000;left:704.5px;letter-spacing:-0.3px">00.00.0000</div>
<div class="t" style="top:378.5px;font-size:13px;color:#000;left:777px;letter-spacing:-0.2px">Správce systému K2</div>
<div class="t" style="top:378.5px;font-size:13px;color:#000;right:576px;letter-spacing:-0.3px">29.08.2023 07:46:...</div>
<div class="t" style="top:378.5px;font-size:13px;color:#000;left:1069px;letter-spacing:-0.3px">28.08.2023 08:...</div>
<div class="t" style="top:378.5px;font-size:13px;color:#000;left:1172.5px;letter-spacing:-0.2px">Správce s...</div>
<div class="t" style="top:378.5px;font-size:13px;color:#000;right:227.5px;letter-spacing:-0.3px">28.08.2023 07:48:18</div>
<svg class="a" style="left:1035px;top:379px;" width="13" height="14" viewBox="0 0 13 14"><circle cx="6.5" cy="4" r="3.3" stroke="#333" stroke-width="1.2" fill="none"/><path d="M0.8 13.5C1.3 9.5 3.5 8 6.5 8C9.5 8 11.7 9.5 12.2 13.5" stroke="#333" stroke-width="1.2" fill="none"/></svg>
<div class="a" style="left:79px;top:397px;width:1295px;height:21px;background:#cceefa;"></div>
<div class="a" style="left:106px;top:397px;width:1px;height:21px;background:#d9d9d9;"></div>
<div class="a" style="left:167px;top:397px;width:1px;height:21px;background:#d9d9d9;"></div>
<div class="a" style="left:283px;top:397px;width:1px;height:21px;background:#d9d9d9;"></div>
<div class="a" style="left:381px;top:397px;width:1px;height:21px;background:#d9d9d9;"></div>
<div class="a" style="left:457px;top:397px;width:1px;height:21px;background:#d9d9d9;"></div>
<div class="a" style="left:510px;top:397px;width:1px;height:21px;background:#d9d9d9;"></div>
<div class="a" style="left:635px;top:397px;width:1px;height:21px;background:#d9d9d9;"></div>
<div class="a" style="left:697px;top:397px;width:1px;height:21px;background:#d9d9d9;"></div>
<div class="a" style="left:771px;top:397px;width:1px;height:21px;background:#d9d9d9;"></div>
<div class="a" style="left:901px;top:397px;width:1px;height:21px;background:#d9d9d9;"></div>
<div class="a" style="left:1025px;top:397px;width:1px;height:21px;background:#d9d9d9;"></div>
<div class="a" style="left:1058px;top:397px;width:1px;height:21px;background:#d9d9d9;"></div>
<div class="a" style="left:1166px;top:397px;width:1px;height:21px;background:#d9d9d9;"></div>
<div class="a" style="left:1246px;top:397px;width:1px;height:21px;background:#d9d9d9;"></div>
<div class="a" style="left:79px;top:418px;width:1296px;height:1px;background:#d9d9d9;"></div>
<svg class="a" style="left:128px;top:399px;" width="17" height="17" viewBox="0 0 17 17"><rect width="17" height="17" fill="#0b3d5c"/><path d="M4 8.6L7 11.6L13 5.4" stroke="#fff" stroke-width="1.9" fill="none"/></svg>
<div class="t" style="top:400.5px;font-size:13px;color:#000;left:173px;letter-spacing:-0.05px">Denní diagnostika</div>
<div class="t" style="top:401px;font-size:12px;color:#a8a8a8;left:293px;letter-spacing:-0.75px">??????????????</div>
<div class="t" style="top:400.5px;font-size:13px;color:#000;left:463px;letter-spacing:-0.2px">Denně</div>
<div class="t" style="top:400.5px;font-size:13px;color:#000;right:966px;letter-spacing:-0.3px">28.08.2023 08:51:44</div>
<div class="t" style="top:400.5px;font-size:13px;color:#000;right:904.5px;">1</div>
<div class="t" style="top:400.5px;font-size:13px;color:#000;left:704.5px;letter-spacing:-0.3px">00.00.0000</div>
<div class="t" style="top:400.5px;font-size:13px;color:#000;left:777px;letter-spacing:-0.2px">Správce systému K2</div>
<div class="a" style="left:902px;top:397px;width:121px;height:19px;border:1px dotted #000;background:#aee4fa"></div>
<div class="t" style="top:400.5px;font-size:13px;color:#000;right:576px;letter-spacing:-0.3px">29.08.2023 08:51:...</div>
<div class="t" style="top:400.5px;font-size:13px;color:#000;left:1069px;letter-spacing:-0.3px">00.00.0000 00:...</div>
<div class="t" style="top:400.5px;font-size:13px;color:#000;left:1172.5px;letter-spacing:-0.2px">Správce s...</div>
<div class="t" style="top:400.5px;font-size:13px;color:#000;right:227.5px;letter-spacing:-0.3px">28.08.2023 08:52:03</div>
<svg class="a" style="left:1032px;top:399px;" width="17" height="17" viewBox="0 0 17 17"><circle cx="8.5" cy="8.5" r="8.5" fill="#ee4f55"/><path d="M4.8 4.8L12.2 12.2M12.2 4.8L4.8 12.2" stroke="#fff" stroke-width="1.3"/></svg>
<div class="a" style="left:78px;top:777px;width:1313px;height:25px;background:#f0f0f0;border:1px solid #cfcfcf"></div>
<div class="a" style="left:79px;top:779px;width:19px;height:19px;background:#cccccc;border:2px solid #7a7a7a"></div>
<svg class="a" style="left:83px;top:784px;" width="16" height="13" viewBox="0 0 16 13"><path d="M0.7 1C3 0.2 5.5 0.2 7.5 1.3C9.5 0.2 12 0.2 14.3 1V11.3C12 10.5 9.5 10.5 7.5 11.8C5.5 10.5 3 10.5 0.7 11.3Z M7.5 1.3V12" stroke="#1f5ba6" stroke-width="1.3" fill="none"/></svg>
<div class="a" style="left:103px;top:781px;width:1px;height:20px;background:#cfcfcf;"></div>
<div class="a" style="left:146px;top:781px;width:1px;height:20px;background:#cfcfcf;"></div>
<div class="a" style="left:263px;top:781px;width:1px;height:20px;background:#cfcfcf;"></div>
<div class="a" style="left:1340px;top:781px;width:1px;height:20px;background:#cfcfcf;"></div>
<div class="a" style="left:1366px;top:781px;width:1px;height:20px;background:#cfcfcf;"></div>
<svg class="a" style="left:108px;top:782px;" width="17" height="17" viewBox="0 0 17 17"><g transform="translate(8.35 8.5)"><path d="M0 -7.3V7.3M-6.32 -3.65L6.32 3.65M-6.32 3.65L6.32 -3.65" stroke="#1f5ba6" stroke-width="3.6" stroke-linecap="butt"/><path d="M0 -6.2V6.2M-5.37 -3.1L5.37 3.1M-5.37 3.1L5.37 -3.1" stroke="#f0f0f0" stroke-width="1.4" stroke-linecap="butt"/></g></svg>
<div class="t" style="top:783px;font-size:12px;color:#1f5ba6;left:133px;">0</div>
<div class="t" style="top:783px;font-size:12px;color:#1f5ba6;left:153.5px;letter-spacing:-0.2px">Počet záznamů: 7/7</div>
<svg class="a" style="left:1347px;top:784px;" width="13" height="13" viewBox="0 0 13 13"><path d="M12.5 1H1L6.5 6.5L1 12H12.5" stroke="#1f5ba6" stroke-width="1.3" fill="none"/></svg>
<svg class="a" style="left:1372px;top:783px;" width="15" height="15" viewBox="0 0 15 15"><path d="M1 13.5L1.8 10L10 1.8L12.7 4.5L4.5 12.7Z" stroke="#1f5ba6" stroke-width="1.2" fill="none"/><path d="M7 14H14.5" stroke="#1f5ba6" stroke-width="1.3"/></svg>
<div class="a" style="left:1403px;top:34px;width:7px;height:777px;background:#00aeef;"></div>
<div class="a" style="left:1413px;top:34px;width:179px;height:777px;background:#0054a6;"></div>
<svg class="a" style="left:1569px;top:39px;" width="15" height="15" viewBox="0 0 15 15"><path d="M6.6 5.3H1.7V13.6H9.9V8.6" stroke="#fff" stroke-width="1.4" fill="none"/><path d="M5.2 1.7H13.4V9.9" stroke="#fff" stroke-width="1.4" fill="none"/><path d="M5.8 9.4L11.8 3.4" stroke="#fff" stroke-width="1.4"/><path d="M8.3 3.2H12V6.9" stroke="#fff" stroke-width="1.2" fill="none"/></svg>
<div class="a" style="left:1416px;top:62px;width:173px;height:25px;background:#00aeef;"></div>
<div class="t" style="top:68.0px;font-size:13px;color:#fff;font-weight:bold;left:1420px;">Základní informace</div>
<div class="a" style="left:1564px;top:64px;width:1px;height:21px;background:#1591c9;"></div>
<svg class="a" style="left:1569px;top:71px;" width="15" height="8" viewBox="0 0 15 8"><path d="M0.8 7.2L7.5 0.8L14.2 7.2" stroke="#fff" stroke-width="1.3" fill="none"/></svg>
<div class="a" style="left:1416px;top:87px;width:173px;height:199px;background:#fafafa;"></div>
<div class="t" style="top:93px;font-size:12px;color:#1f4cac;left:1423.5px;letter-spacing:-0.3px">ID:</div>
<div class="t" style="top:93px;font-size:12px;color:#000;right:14px;letter-spacing:-0.6px">28</div>
<div class="a" style="left:1423px;top:108px;width:159px;height:1px;background:#e3e3e3;"></div>
<div class="t" style="top:115px;font-size:12px;color:#1f4cac;left:1423.5px;letter-spacing:-0.3px">Název:</div>
<div class="t" style="top:115px;font-size:12px;color:#000;right:14px;letter-spacing:-0.1px">Denní diagnostika</div>
<div class="a" style="left:1423px;top:130px;width:159px;height:1px;background:#e3e3e3;"></div>
<div class="t" style="top:137px;font-size:12px;color:#1f4cac;left:1423.5px;letter-spacing:-0.3px">Spustit:</div>
<div class="t" style="top:137px;font-size:12px;color:#000;right:14px;letter-spacing:-0.6px">28.08.2023 08:51:44</div>
<div class="a" style="left:1423px;top:152px;width:159px;height:1px;background:#e3e3e3;"></div>
<div class="t" style="top:159px;font-size:12px;color:#1f4cac;left:1423.5px;letter-spacing:-0.3px">Uživatel:</div>
<div class="t" style="top:159px;font-size:12px;color:#000;right:14px;letter-spacing:-0.6px">K2</div>
<div class="a" style="left:1423px;top:174px;width:159px;height:1px;background:#e3e3e3;"></div>
<div class="t" style="top:181px;font-size:12px;color:#1f4cac;left:1423.5px;letter-spacing:-0.3px">Výskyt:</div>
<div class="t" style="top:181px;font-size:12px;color:#000;right:14px;letter-spacing:-0.1px">Denně</div>
<div class="a" style="left:1423px;top:196px;width:159px;height:1px;background:#e3e3e3;"></div>
<div class="t" style="top:203px;font-size:12px;color:#1f4cac;left:1423.5px;letter-spacing:-0.3px">Platnost do:</div>
<div class="t" style="top:203px;font-size:12px;color:#000;right:14px;letter-spacing:-0.6px">00.00.0000</div>
<div class="a" style="left:1423px;top:218px;width:159px;height:1px;background:#e3e3e3;"></div>
<div class="t" style="top:229px;font-size:12px;color:#1f4cac;left:1423.5px;letter-spacing:-0.3px">Povoleno:</div>
<div class="a" style="left:1423px;top:248px;width:136px;height:1px;background:#e3e3e3;"></div>
<svg class="a" style="left:1559px;top:225px;" width="23" height="23" viewBox="0 0 23 23"><rect width="23" height="23" fill="#000"/><path d="M5.5 12L9.8 16.2L17.5 7.5" stroke="#fff" stroke-width="2.6" fill="none"/></svg>
<div class="t" style="top:259px;font-size:12px;color:#1f4cac;left:1423.5px;letter-spacing:-0.3px">Systémová úloha:</div>
<div class="a" style="left:1423px;top:278px;width:136px;height:1px;background:#e3e3e3;"></div>
<div class="a" style="left:1559px;top:255px;width:17px;height:17px;border:3px solid #000;background:#fafafa"></div>
<div class="a" style="left:1px;top:814px;width:1594px;height:1px;background:#d4d4d4;"></div>
<div class="t" style="top:822px;font-size:12px;color:#000;left:10px;letter-spacing:-0.2px">F1</div>
<div class="t" style="top:822px;font-size:12px;color:#000;left:142px;letter-spacing:-0.2px">F2</div>
<div class="a" style="left:135px;top:821px;width:1px;height:17px;background:#d4d4d4;"></div>
<div class="t" style="top:822px;font-size:12px;color:#000;left:274px;letter-spacing:-0.2px">F3</div>
<div class="a" style="left:267px;top:821px;width:1px;height:17px;background:#d4d4d4;"></div>
<div class="t" style="top:822px;font-size:12px;color:#000;left:406px;letter-spacing:-0.2px">F4</div>
<div class="a" style="left:399px;top:821px;width:1px;height:17px;background:#d4d4d4;"></div>
<div class="t" style="top:822px;font-size:12px;color:#000;left:538px;letter-spacing:-0.2px">F5</div>
<div class="a" style="left:531px;top:821px;width:1px;height:17px;background:#d4d4d4;"></div>
<div class="t" style="top:822px;font-size:12px;color:#000;left:670px;letter-spacing:-0.2px">F6</div>
<div class="a" style="left:663px;top:821px;width:1px;height:17px;background:#d4d4d4;"></div>
<div class="t" style="top:822px;font-size:12px;color:#000;left:802px;letter-spacing:-0.2px">F7-Hledat text...</div>
<div class="a" style="left:795px;top:821px;width:1px;height:17px;background:#d4d4d4;"></div>
<div class="t" style="top:822px;font-size:12px;color:#000;left:934px;letter-spacing:-0.2px">F8</div>
<div class="a" style="left:927px;top:821px;width:1px;height:17px;background:#d4d4d4;"></div>
<div class="t" style="top:822px;font-size:12px;color:#000;left:1066px;letter-spacing:-0.2px">F9</div>
<div class="a" style="left:1059px;top:821px;width:1px;height:17px;background:#d4d4d4;"></div>
<div class="t" style="top:822px;font-size:12px;color:#000;left:1198px;letter-spacing:-0.2px">F10</div>
<div class="a" style="left:1191px;top:821px;width:1px;height:17px;background:#d4d4d4;"></div>
<div class="t" style="top:822px;font-size:12px;color:#000;left:1330px;letter-spacing:-0.2px">F11</div>
<div class="a" style="left:1323px;top:821px;width:1px;height:17px;background:#d4d4d4;"></div>
<div class="t" style="top:822px;font-size:12px;color:#000;left:1462px;letter-spacing:-0.2px">F12</div>
<div class="a" style="left:1455px;top:821px;width:1px;height:17px;background:#d4d4d4;"></div>
</body></html>
